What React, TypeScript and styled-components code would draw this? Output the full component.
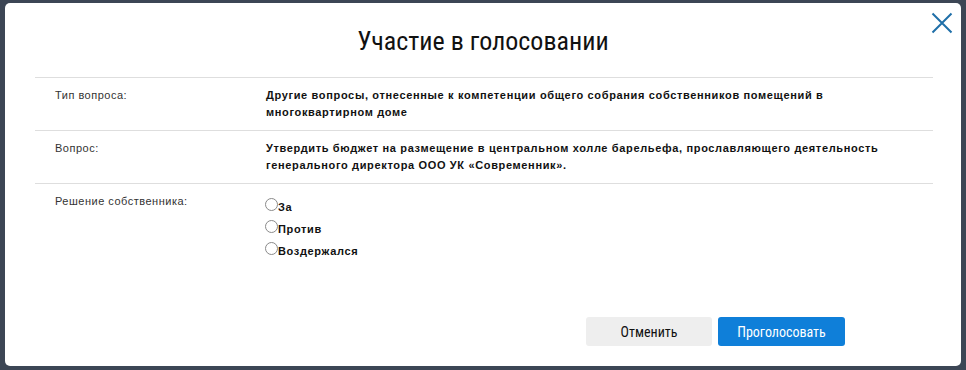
import React from "react";
import styled, { createGlobalStyle } from "styled-components";

const Global = createGlobalStyle`
  html, body { margin: 0; padding: 0; }
  body {
    background: #3c4655;
    font-family: "Liberation Sans", Arial, sans-serif;
    width: 966px;
    height: 370px;
    overflow: hidden;
  }
`;

const Overlay = styled.div`
  padding: 3px 5px 4px 5px;
  box-sizing: border-box;
  height: 370px;
`;

const Modal = styled.div`
  position: relative;
  background: #fff;
  border-radius: 5px;
  height: 363px;
  display: flex;
  flex-direction: column;
  box-sizing: border-box;
`;

const Header = styled.div`
  height: 74px;
  display: flex;
  align-items: center;
  justify-content: center;
  padding-top: 2px;
  box-sizing: border-box;
`;

const Title = styled.h2`
  margin: 0;
  font-family: "Roboto Condensed", "Roboto", sans-serif;
  font-stretch: condensed;
  font-weight: 400;
  font-size: 26px;
  color: #111;
`;

const Close = styled.button`
  position: absolute;
  top: 7px;
  right: 6px;
  width: 26px;
  height: 26px;
  padding: 0;
  border: 0;
  background: none;
  cursor: pointer;
  display: flex;
  align-items: center;
  justify-content: center;
`;

const Table = styled.div`
  margin: 0 28px 0 30px;
`;

const Row = styled.div`
  display: grid;
  grid-template-columns: 211px 1fr;
  border-top: 1px solid #dedede;
  padding: 9px 20px 9px 20px;
  font-size: 11px;
  line-height: 17px;
`;

const Label = styled.div`
  color: #333;
  letter-spacing: 0.5px;
`;

const Value = styled.div`
  color: #111;
  font-weight: 700;
  letter-spacing: 0.65px;
`;

const Options = styled.div`
  display: flex;
  flex-direction: column;
  margin-left: -1px;
  padding-top: 3px;
`;

const Option = styled.label`
  display: flex;
  align-items: center;
  height: 22px;
  font-weight: 700;
  letter-spacing: 0.65px;
  color: #111;
  cursor: pointer;
`;

const Radio = styled.span`
  width: 11px;
  height: 11px;
  border: 1px solid #8a8a8a;
  border-radius: 50%;
  background: #fff;
  margin-top: -5px;
  flex: none;
`;

const Footer = styled.div`
  margin-top: auto;
  display: flex;
  justify-content: flex-end;
  gap: 6px;
  padding: 0 116px 20px 0;
`;

const Button = styled.button<{ $primary?: boolean }>`
  width: ${(p) => (p.$primary ? 127 : 126)}px;
  height: 29px;
  border: 0;
  border-radius: 3px;
  font-family: "Roboto Condensed", "Roboto", sans-serif;
  font-stretch: condensed;
  font-size: 14px;
  background: ${(p) => (p.$primary ? "#0f7fd9" : "#eeeeee")};
  color: ${(p) => (p.$primary ? "#fff" : "#111")};
  cursor: pointer;
`;

export default function App() {
  return (
    <>
      <Global />
      <Overlay>
        <Modal>
          <Header>
            <Title>Участие в голосовании</Title>
          </Header>
          <Close aria-label="Закрыть">
            <svg width="22" height="22" viewBox="0 0 22 22">
              <path d="M1.5 1.5 L20.5 20.5 M20.5 1.5 L1.5 20.5" stroke="#1f6fa8" strokeWidth="2" fill="none" />
            </svg>
          </Close>
          <Table>
            <Row>
              <Label>Тип вопроса:</Label>
              <Value>
                Другие вопросы, отнесенные к компетенции общего собрания собственников помещений в
                многоквартирном доме
              </Value>
            </Row>
            <Row>
              <Label>Вопрос:</Label>
              <Value>
                Утвердить бюджет на размещение в центральном холле барельефа, прославляющего деятельность
                генерального директора ООО УК «Современник».
              </Value>
            </Row>
            <Row>
              <Label>Решение собственника:</Label>
              <Options>
                <Option><Radio />За</Option>
                <Option><Radio />Против</Option>
                <Option><Radio />Воздержался</Option>
              </Options>
            </Row>
          </Table>
          <Footer>
            <Button>Отменить</Button>
            <Button $primary>Проголосовать</Button>
          </Footer>
        </Modal>
      </Overlay>
    </>
  );
}
